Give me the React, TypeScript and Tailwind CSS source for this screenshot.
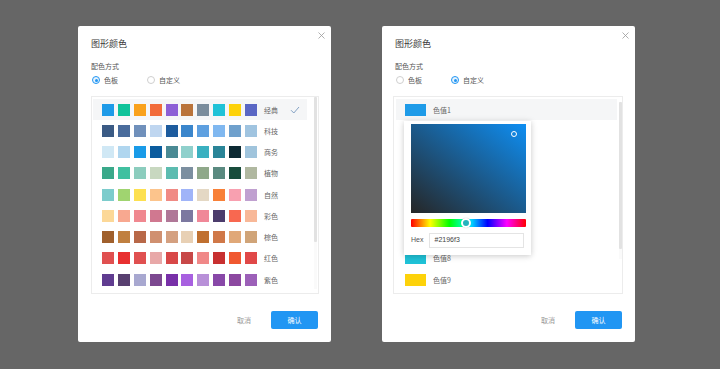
import React from "react";

const palettes: { name: string; colors: string[] }[] = [
  { name: "经典", colors: ["#1e9be8", "#10c39a", "#f9a11b", "#f26b3a", "#8c5fd6", "#b9733a", "#7a8c9c", "#1fc2d7", "#fdd20a", "#5a67c4"] },
  { name: "科技", colors: ["#3b5b85", "#4a6c9c", "#7090bb", "#bfd6f0", "#1e5c9e", "#3b86cc", "#5ea0e0", "#80b8f0", "#6fa0cc", "#a0c4e0"] },
  { name: "商务", colors: ["#d0e8f5", "#b0d6ef", "#1a9be8", "#0b5c9e", "#4a8a94", "#8fd0cc", "#3ab0c0", "#2a8598", "#0d2a33", "#a0c4dc"] },
  { name: "植物", colors: ["#3aa98a", "#40c0a0", "#8ccdbe", "#c8d8c0", "#5cbcb0", "#7c8fa0", "#8fa88a", "#5a8a80", "#184d3c", "#b0b8a0"] },
  { name: "自然", colors: ["#7ccccc", "#a0d470", "#fde050", "#fcc48c", "#f08a84", "#a0b4f8", "#e4d8c4", "#f88038", "#f8a0b0", "#c0a0d0"] },
  { name: "彩色", colors: ["#fcd898", "#f8a890", "#f08890", "#d07890", "#b07898", "#7c78a0", "#f08898", "#4c3c6c", "#f86850", "#f8b898"] },
  { name: "棕色", colors: ["#a0602c", "#c08040", "#b86848", "#d09070", "#d4a080", "#e8d0b4", "#c07030", "#d07848", "#e0a878", "#d0a478"] },
  { name: "红色", colors: ["#e05050", "#e83030", "#e05050", "#e8a8a8", "#d84848", "#c84848", "#f08888", "#c83030", "#f05830", "#e04848"] },
  { name: "紫色", colors: ["#603c90", "#584070", "#a8a8d0", "#7c4890", "#7830a8", "#a860e0", "#b890d8", "#8848a8", "#8c48a0", "#9c60b8"] },
];

const custom = palettes[0].colors.slice(0, 9);

function Radio({ checked, label, width }: { checked: boolean; label: string; width: string }) {
  return (
    <div className={`flex items-center ${width}`}>
      <div
        className={`w-[8px] h-[8px] rounded-full border flex items-center justify-center ${
          checked ? "border-[#2196f3] bg-[#e8f3fd]" : "border-[#cfcfcf] bg-white"
        }`}
      >
        {checked && <div className="w-[3px] h-[3px] rounded-full bg-[#2196f3]" />}
      </div>
      <span className="ml-[4px] text-[7px] leading-[10px] text-[#555]">{label}</span>
    </div>
  );
}

function Dialog({ custom: isCustom, children }: { custom: boolean; children: React.ReactNode }) {
  return (
    <div className="relative w-[253px] h-[316px] bg-white rounded-[2px] flex flex-col font-['Noto_Sans_CJK_SC',sans-serif]">
      <svg className="absolute right-[6px] top-[6px]" width="7" height="7" viewBox="0 0 7 7">
        <path d="M0.5 0.5 L6.5 6.5 M6.5 0.5 L0.5 6.5" stroke="#9a9a9a" strokeWidth="0.8" />
      </svg>
      <div className="pl-[13px] pt-[12px] text-[9px] leading-[12px] text-[#3a3a3a]">图形颜色</div>
      <div className="pl-[13px] mt-[11px] text-[7px] leading-[10px] text-[#555]">配色方式</div>
      <div className="pl-[14px] mt-[4px] flex items-center">
        <Radio checked={!isCustom} label="色板" width="w-[55px]" />
        <Radio checked={isCustom} label="自定义" width="w-[60px]" />
      </div>
      {children}
      <div className="mt-auto mb-[13px] flex items-center justify-end pr-[13px]">
        <span className="text-[7px] leading-[10px] text-[#999] mr-[20px]">取消</span>
        <div className="w-[47px] h-[18px] bg-[#2196f3] rounded-[2px] flex items-center justify-center text-[7px] text-white">
          确认
        </div>
      </div>
    </div>
  );
}

function Scrollbar({ thumb }: { thumb: string }) {
  return (
    <div className="w-[3px] h-full flex flex-col bg-[#fafafa]">
      <div className={`w-[3px] ${thumb} bg-[#e2e2e2] rounded-[1px]`} />
    </div>
  );
}

function PaletteDialog() {
  return (
    <Dialog custom={false}>
      <div className="ml-[13px] mt-[11px] w-[228px] h-[198px] border border-[#ececec] flex overflow-hidden">
        <div className="w-[214px] ml-[1px] pt-[2px]">
          {palettes.map((p, i) => (
            <div key={p.name} className={`h-[21.25px] flex items-center pl-[9px] ${i === 0 ? "bg-[#f5f6f7]" : ""}`}>
              <div className="flex gap-[3.9px]">
                {p.colors.map((c, j) => (
                  <div key={j} className="w-[12px] h-[12px]" style={{ backgroundColor: c }} />
                ))}
              </div>
              <span className="ml-[7px] text-[7px] leading-[10px] text-[#666]">{p.name}</span>
              {i === 0 && (
                <svg className="ml-[12px]" width="10" height="8" viewBox="0 0 10 8">
                  <path d="M1 4.2 L3.8 7 L9 1" fill="none" stroke="#7596bd" strokeWidth="0.9" />
                </svg>
              )}
            </div>
          ))}
        </div>
        <div className="ml-[7px] pb-[4px] h-full">
          <Scrollbar thumb="h-[145px]" />
        </div>
      </div>
    </Dialog>
  );
}

function CustomDialog() {
  return (
    <Dialog custom={true}>
      <div className="relative ml-[11px] mt-[11px] w-[230px] h-[198px] border border-[#ececec] flex overflow-visible">
        <div className="w-[221px] ml-[2px] pt-[2px] overflow-hidden">
          {custom.map((c, i) =>
            i >= 1 && i <= 6 ? (
              <div key={i} className="h-[21.25px]" />
            ) : (
              <div key={i} className={`h-[21.25px] flex items-center pl-[9px] ${i === 0 ? "bg-[#f5f6f7]" : ""}`}>
                <div className="w-[21px] h-[12px]" style={{ backgroundColor: c }} />
                <span className="ml-[7px] text-[7px] leading-[10px] text-[#666]">{`色值${i + 1}`}</span>
              </div>
            )
          )}
        </div>
        <div className="ml-[2px] pt-[5px] pb-[34px] h-full">
          <Scrollbar thumb="h-[147px]" />
        </div>
        <div className="absolute left-[10px] top-[23.5px] w-[127px] h-[134px] bg-white shadow-[0_1px_6px_rgba(0,0,0,0.22)] px-[7px] pt-[3px]">
          <div className="relative w-[115px] h-[89px] bg-[linear-gradient(to_top_right,#262626,#1b5a8c_50%,#0e8ef2)]">
            <div className="absolute left-[100px] top-[7px] w-[6px] h-[6px] rounded-full border border-white" />
          </div>
          <div className="relative mt-[6px] w-[115px] h-[8px] rounded-[1px] bg-[linear-gradient(to_right,#ff0000,#ffff00,#00ff00,#00ffff,#0000ff,#ff00ff,#ff0000)]">
            <div className="absolute left-[50px] top-[-1px] w-[10px] h-[10px] rounded-full border-[2px] border-white bg-[#24b3bd] shadow-[0_0_1px_rgba(0,0,0,0.3)]" />
          </div>
          <div className="mt-[6px] flex items-center">
            <span className="w-[18px] text-[7px] leading-[10px] text-[#555] font-['Liberation_Sans',sans-serif]">Hex</span>
            <div className="w-[98px] h-[15px] border border-[#e4e4e4] flex items-center pl-[5px] text-[7px] text-[#444] font-['Liberation_Sans',sans-serif]">
              #2196f3
            </div>
          </div>
        </div>
      </div>
    </Dialog>
  );
}

export default function App() {
  return (
    <div className="w-[720px] h-[369px] bg-[#666666] flex gap-[51px] pl-[78px] pt-[26px]">
      <PaletteDialog />
      <CustomDialog />
    </div>
  );
}
